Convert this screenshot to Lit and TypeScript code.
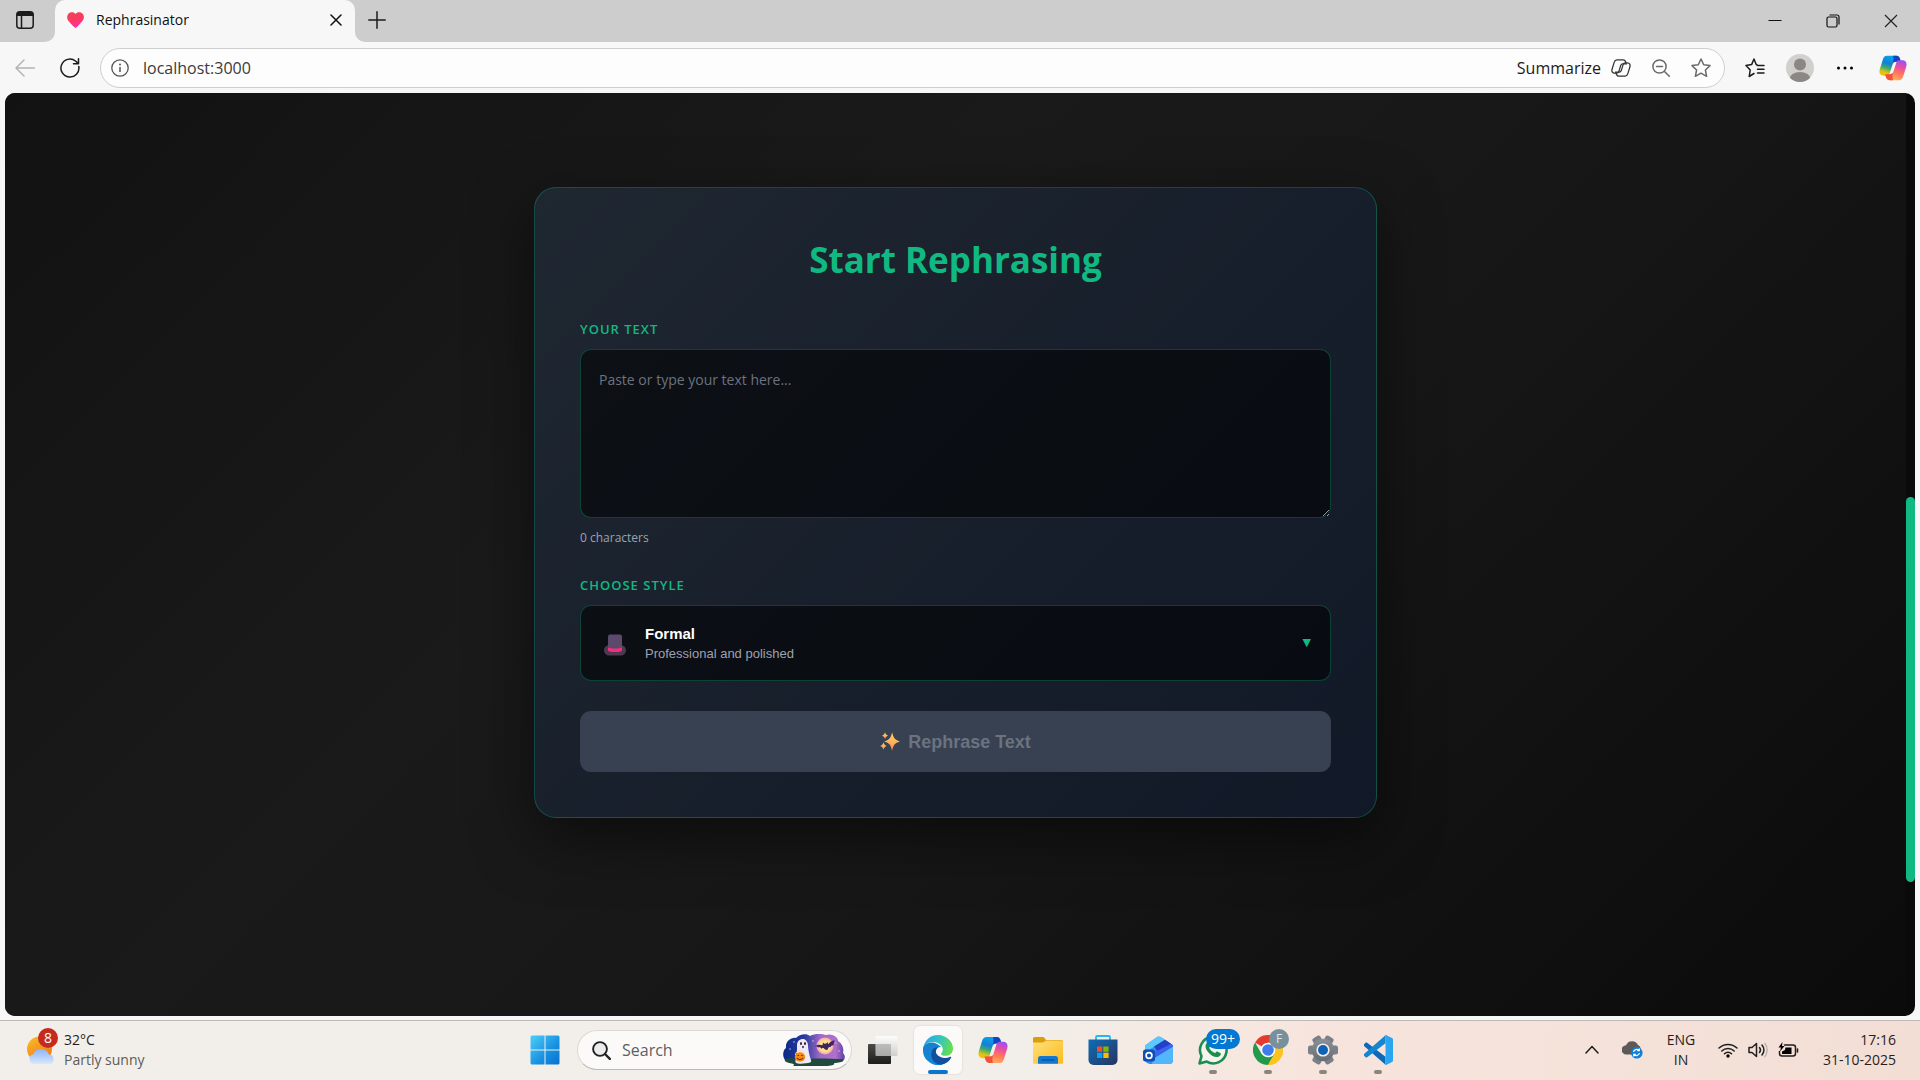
import { LitElement, html, svg, css, nothing } from "lit";
import type { TemplateResult } from "lit";
import { customElement, state } from "lit/decorators.js";
import { classMap } from "lit/directives/class-map.js";

const base = css`
  * { box-sizing: border-box; }
  button, input, select, textarea { font: inherit; color: inherit; margin: 0; }
  button { border: 0; background: none; padding: 0; display: flex; align-items: center; justify-content: center; cursor: pointer; }
  svg { display: block; flex: none; }
  .line { fill: none; stroke: currentColor; stroke-width: 1.5; stroke-linecap: round; stroke-linejoin: round; }
`;

const ribbon =
  "M8.5 1H18.5C21.3 1 22.2 3 22.8 5.2L23.4 7.4H17.8C15.8 7.4 15 8.6 14.4 10.4L11.6 19.4C11 21.4 10 22.2 8 22.2H4.8C1.2 22.2-.3 19.2 .8 15.6L4.2 4.6C5 2.2 6.4 1 8.5 1Z";
const fold = "M15 1h3.5c2.8 0 3.7 2 4.3 4.2l.6 2.2h-5.6c-2 0-2.8 1.2-3.4 3l-.5 1.6c2-4 1.900-8.400 1.100-11Z";

const copilotLogo = (size: number) => html`
  <svg width=${size} height=${size} viewBox="0 0 30 28" aria-hidden="true">
    <defs>
      <linearGradient id="cpA" x1=".6" y1="0" x2=".3" y2="1">
        <stop offset="0" stop-color="#0aa4e8" /><stop offset=".4" stop-color="#1180d8" />
        <stop offset=".62" stop-color="#3aa870" /><stop offset=".85" stop-color="#d8c418" /><stop offset="1" stop-color="#f5c400" />
      </linearGradient>
      <linearGradient id="cpB" x1=".6" y1="0" x2=".3" y2="1">
        <stop offset="0" stop-color="#ffb35c" /><stop offset=".35" stop-color="#ff7a5c" />
        <stop offset=".65" stop-color="#ee4f9a" /><stop offset="1" stop-color="#a04ff0" />
      </linearGradient>
    </defs>
    <path d=${ribbon} fill="url(#cpA)" />
    <path d=${fold} fill="#1442c4" />
    <g transform="rotate(180 15 14)">
      <path d=${ribbon} fill="url(#cpB)" />
      <path d=${fold} fill="#f4503a" />
    </g>
  </svg>`;

@customElement("browser-bar")
class BrowserBar extends LitElement {
  static styles = [
    base,
    css`
      :host { display: block; font-family: "Open Sans", "Noto Sans", sans-serif; color: #1b1b1b; background: #f7f7f7; }
      .strip { display: flex; height: 42px; }
      .lead { width: 55px; background: #cdcdcd; border-bottom-right-radius: 10px; display: flex; align-items: center; justify-content: center; padding-right: 5px; padding-bottom: 2px; }
      .slot { width: 300px; background: linear-gradient(#cdcdcd 50%, #f7f7f7 50%); }
      .tab { display: flex; align-items: center; height: 100%; padding: 0 10px 2px 12px; background: #f7f7f7; border-radius: 10px 10px 0 0; font-size: 14px; color: #111; }
      .title { flex: 1; padding: 0 0 2px 12px; }
      .close { width: 18px; height: 24px; }
      .rest { flex: 1; display: flex; justify-content: space-between; background: #cdcdcd; border-bottom-left-radius: 10px; }
      .add { width: 44px; padding-bottom: 2px; }
      .win { display: flex; }
      .win button { width: 58px; }
      .tools { display: flex; align-items: center; gap: 5px; padding: 6px 4px 5px 5px; }
      .tools > button { width: 40px; height: 40px; }
      .tools > .wide { width: 46px; }
      .tools > .dim { color: #b4b4b4; }
      .address { flex: 1; display: flex; align-items: center; height: 40px; margin: 0 5px; padding: 0 3px 0 10px; border: 1px solid #cfcfcf; border-radius: 20px; background: #fdfdfd; font-size: 16px; }
      .url { flex: 1; min-width: 0; border: 0; outline: 0; padding: 0 0 0 14px; background: none; color: #3a3a3a; }
      .sum { gap: 10px; }
      .mini { width: 40px; height: 38px; color: #6a6a6a; }
      .sum + .mini { margin-left: 10px; }
    `,
  ];

  render() {
    return html`
      <div class="strip">
        <div class="lead">
          <button aria-label="Tab actions">
            <svg width="18" height="18" viewBox="0 0 18 18"><rect class="line" x=".8" y=".8" width="16.400" height="16.400" rx="3" /><path d="M1 3.500a2.500 2.500 0 0 1 2.500-2.500h11a2.500 2.500 0 0 1 2.500 2.500V5H1Z" fill="currentColor" /><path class="line" d="M5.500 5v12" /></svg>
          </button>
        </div>
        <div class="slot">
          <div class="tab">
            <svg width="17" height="16" viewBox="0 0 17 16">
              <defs><linearGradient id="ht" x1=".3" y1="0" x2=".6" y2="1"><stop offset="0" stop-color="#f2415a" /><stop offset=".5" stop-color="#fb3a62" /><stop offset="1" stop-color="#ff2fb4" /></linearGradient></defs>
              <path d="M8.500 2C10-.3 13.600-.3 15.400 1.600c2 2.200 2 5-.2 7.700C13.500 11.500 10.500 15 8.500 16 6.500 15 3.500 11.500 1.800 9.300-.4 6.600-.4 3.800 1.600 1.600 3.400-.3 7-.3 8.500 2Z" fill="url(#ht)" />
            </svg>
            <span class="title">Rephrasinator</span>
            <button class="close" aria-label="Close tab"><svg width="12" height="12" viewBox="0 0 12 12"><path class="line" d="M1 1l10 10M11 1L1 11" /></svg></button>
          </div>
        </div>
        <div class="rest">
          <button class="add" aria-label="New tab"><svg width="18" height="18" viewBox="0 0 18 18"><path class="line" d="M9 .8v16.400M.8 9h16.400" /></svg></button>
          <div class="win">
            <button aria-label="Minimize"><svg width="14" height="14" viewBox="0 0 14 14"><path d="M.5 6h13v1H.5z" fill="#111" /></svg></button>
            <button aria-label="Restore"><svg width="14" height="14" viewBox="0 0 14 14"><rect x="1" y="3" width="10" height="10" rx="1.500" fill="none" stroke="#111" stroke-width="1.200" /><path d="M3.500 1h7.500a2 2 0 0 1 2 2v7.500" fill="none" stroke="#111" stroke-width="1.200" /></svg></button>
            <button aria-label="Close window"><svg width="14" height="14" viewBox="0 0 14 14"><path d="M1 1l12 12M13 1L1 13" stroke="#222" stroke-width="1.200" /></svg></button>
          </div>
        </div>
      </div>
      <div class="tools">
        <button class="dim" aria-label="Back"><svg width="20" height="18" viewBox="0 0 20 18"><path class="line" d="M19.500 9H1M9 1L1 9l8 8" /></svg></button>
        <button aria-label="Reload"><svg width="20" height="20" viewBox="0 0 20 20"><path class="line" d="M18.800 8.500A9 9 0 1 1 15.500 3l2.800 2.600M18.500 .8v5h-5" /></svg></button>
        <div class="address">
          <svg width="18" height="18" viewBox="0 0 18 18"><circle cx="9" cy="9" r="8.200" fill="none" stroke="#555" stroke-width="1.300" /><path d="M9 8v5" stroke="#555" stroke-width="1.500" /><circle cx="9" cy="5.500" r="1" fill="#555" /></svg>
          <input class="url" type="text" aria-label="Address" .value=${"localhost:3000"} />
          <button class="sum">
            Summarize
            <svg width="20" height="18" viewBox="-1 0 32 28"><g fill="none" stroke="#333" stroke-width="2"><path d=${ribbon} /><path d=${ribbon} transform="rotate(180 15 14)" /></g></svg>
          </button>
          <button class="mini" aria-label="Zoom"><svg width="18" height="18" viewBox="0 0 18 18"><circle class="line" cx="7.500" cy="7.500" r="6.600" /><path class="line" d="M12.500 12.500l4.800 4.800M4.500 7.500h6" /></svg></button>
          <button class="mini" aria-label="Add to favorites"><svg width="20" height="20" viewBox="0 0 20 20"><path class="line" d="M10 1l2.700 5.800 6.300.8-4.600 4.400 1.200 6.300L10 15.200l-5.600 3.100L5.600 12 1 7.600l6.300-.8Z" /></svg></button>
        </div>
        <button aria-label="Favorites"><svg width="20" height="20" viewBox="0 0 20 20"><path class="line" d="M12 6.800h-.7L9 1 6.600 6.600 1 7.600l4.200 4.400L4.200 18.500 9 15.500M12.500 7.500H19M12.500 11.200H19M12.500 15H19" /></svg></button>
        <button aria-label="Profile"><svg width="28" height="28" viewBox="0 0 28 28"><defs><clipPath id="av"><circle cx="14" cy="14" r="14" /></clipPath></defs><g clip-path="url(#av)"><rect width="28" height="28" fill="#d2d0cd" /><circle cx="14" cy="10.500" r="6" fill="#8a8785" /><ellipse cx="14" cy="25" rx="10.500" ry="7" fill="#8a8785" /></g></svg></button>
        <button aria-label="Settings and more"><svg width="18" height="4" viewBox="0 0 18 4"><circle cx="2.500" cy="2" r="1.500" /><circle cx="9" cy="2" r="1.500" /><circle cx="15.500" cy="2" r="1.500" /></svg></button>
        <button class="wide" aria-label="Copilot">${copilotLogo(28)}</button>
      </div>
    `;
  }
}

@customElement("rephrase-form")
class RephraseForm extends LitElement {
  @state() private text = "";

  static styles = [
    base,
    css`
      :host { display: block; width: 100%; max-width: 843px; font-family: "Open Sans", "Noto Sans", sans-serif; }
      .card { display: flex; flex-direction: column; padding: 45px; border: 1px solid rgba(16, 185, 129, 0.3); border-radius: 22px; background: linear-gradient(135deg, #1f2731, #111827); box-shadow: 0 20px 60px rgba(0, 0, 0, 0.5); }
      .heading { margin: 0 0 32px; font-size: 35px; line-height: 54px; font-weight: 700; text-align: center; color: #10b981; }
      .label { margin-bottom: 10px; font-size: 13px; line-height: 20px; font-weight: 600; letter-spacing: 1px; text-transform: uppercase; color: #10b981; }
      .text { display: block; width: 100%; height: 169px; padding: 18px; border: 1px solid rgba(16, 185, 129, 0.3); border-radius: 11px; outline: 0; background: rgba(0, 0, 0, 0.55); color: #fff; font-size: 14px; line-height: 24px; resize: vertical; }
      .text::placeholder { color: #6b7280; }
      .count { margin: 10px 0 27px; font-size: 12px; line-height: 20px; color: #9ca3af; }
      .picker { display: grid; align-items: center; margin-bottom: 30px; font-family: "Liberation Sans", Arial, sans-serif; }
      .picker > * { grid-area: 1 / 1; }
      .style { appearance: none; width: 100%; height: 76px; padding: 0 60px 20px 64px; border: 1px solid rgba(16, 185, 129, 0.3); border-radius: 11px; outline: 0; background: rgba(0, 0, 0, 0.55); color: #fff; font-size: 15px; font-weight: 700; }
      .face { display: flex; align-items: center; padding: 0 20px 0 24px; pointer-events: none; }
      .hat { margin-top: 4px; }
      .note { flex: 1; padding: 21px 0 0 19px; font-size: 13px; line-height: 18px; color: #9ca3af; }
      .arrow { font: 11px/16px "DejaVu Sans", sans-serif; color: #10b981; }
      .go { gap: 8px; height: 61px; border-radius: 11px; background: #374151; color: #6b7280; font: 700 18px/24px "Liberation Sans", Arial, sans-serif; }
    `,
  ];

  private onInput(e: Event) {
    this.text = (e.target as HTMLTextAreaElement).value;
  }

  render() {
    return html`
      <form class="card" @submit=${(e: Event) => e.preventDefault()}>
        <h2 class="heading">Start Rephrasing</h2>
        <label class="label" for="text">Your Text</label>
        <textarea class="text" id="text" placeholder="Paste or type your text here..." @input=${this.onInput}></textarea>
        <div class="count">${this.text.length} characters</div>
        <label class="label" for="style">Choose Style</label>
        <div class="picker">
          <select class="style" id="style"><option>Formal</option></select>
          <div class="face">
            <svg class="hat" width="22" height="22" viewBox="0 0 22 22">
              <rect x="0" y="11" width="22" height="10.500" rx="5.200" fill="#4b3a52" />
              <path d="M4 2.500C4 1 5.500.5 6.500.5h9c1 0 2.500.5 2.500 2L18 15H4Z" fill="#5d4a6b" />
              <path d="M4 13.500c4 1.300 10 1.300 14 0v3c-1 2-13 2-14 0Z" fill="#f0307c" />
            </svg>
            <span class="note">Professional and polished</span>
            <span class="arrow" aria-hidden="true">▼</span>
          </div>
        </div>
        <button class="go" type="submit" ?disabled=${!this.text}>
          <svg width="20" height="19" viewBox="0 0 19 18">
            <defs><linearGradient id="sp" x1="0" y1="0" x2="0" y2="1"><stop offset="0" stop-color="#ffd35c" /><stop offset=".5" stop-color="#ffb45c" /><stop offset="1" stop-color="#ff8a5c" /></linearGradient></defs>
            <g fill="url(#sp)">
              <path d="M11.500 .3c1.300 5.500 2.300 7 7.400 8.700-5.100 1.700-6.100 3.200-7.400 8.700-1.300-5.500-2.300-7-7.400-8.700 5.100-1.700 6.100-3.200 7.400-8.700Z" />
              <path d="M4.800.3c.6 2 1.200 2.600 2.900 3.200-1.700.6-2.300 1.200-2.900 3.200-.6-2-1.200-2.600-2.900-3.200 1.700-.6 2.300-1.200 2.900-3.200Z" />
              <path d="M3.300 9.700c.7 2.200 1.400 2.900 3.200 3.500-1.800.7-2.500 1.400-3.200 3.600-.7-2.200-1.400-2.900-3.200-3.600 1.800-.6 2.500-1.300 3.200-3.500Z" />
            </g>
          </svg>
          Rephrase Text
        </button>
      </form>
    `;
  }
}

interface App {
  name: string;
  icon: TemplateResult;
  active?: boolean;
  running?: boolean;
  badge?: string;
  tone?: string;
}

const icon = (body: unknown) => html`<svg width="30" height="30" viewBox="0 0 30 30" aria-hidden="true">${body}</svg>`;

const apps: App[] = [
  {
    name: "Task view",
    icon: icon(svg`<defs><linearGradient id="tv" x1="0" y1="0" x2="0" y2="1"><stop offset="0" stop-color="#4a4a48"/><stop offset="1" stop-color="#1c1c1b"/></linearGradient><linearGradient id="tw" x1="0" y1="0" x2="0" y2="1"><stop offset="0" stop-color="#fff"/><stop offset="1" stop-color="#c9c9c7"/></linearGradient></defs>
      <rect x="0" y="9" width="23" height="20" rx="1" fill="url(#tv)"/><rect x="7.500" y="1" width="22" height="20" rx="1" fill="url(#tw)" opacity=".85"/><rect x="8" y="9" width="15" height="12" fill="#999" opacity=".35"/>`),
  },
  {
    name: "Edge",
    active: true,
    icon: icon(svg`<defs><linearGradient id="eg" x1="0" y1=".3" x2="1" y2=".6"><stop offset="0" stop-color="#2aa6e8"/><stop offset=".45" stop-color="#33c2c6"/><stop offset="1" stop-color="#66e04a"/></linearGradient><linearGradient id="eb" x1="0" y1="0" x2=".4" y2="1"><stop offset="0" stop-color="#1b7fc8"/><stop offset="1" stop-color="#0f86dd"/></linearGradient></defs>
      <path d="M0 14C0 9 5 7 9.500 7.500 14.500 8 18 12 18 12c-3.500 0-5.500 2.500-5.500 6 0 6 5 10 10 10A15 15 0 0 1 0 14Z" fill="url(#eb)"/>
      <path d="M9.500 14.500C6 22 10.500 29.800 18 29.700c5-.7 8.500-3.700 10.200-7.200.2-.7-.3-1-.9-.7-4.800 2.400-11.300 1.200-14-3.300-1-2 0-4.500 1.200-6-2 0-4 .5-5 2Z" fill="#124f9c"/>
      <path d="M.3 12.500C2 4.500 8 0 15 0c8.500 0 15 6.500 15 13.500 0 5-3.500 7.300-7 7.300-3.400 0-5-.9-5-1.800 0-.8 1.800-1.500 1.800-4.500C19.800 9.500 14.500 7 9.500 7 5 7 1.500 9.500.3 12.500Z" fill="url(#eg)"/>`),
  },
  { name: "Copilot", icon: copilotLogo(30) },
  {
    name: "File Explorer",
    icon: icon(svg`<defs><linearGradient id="fe" x1="0" y1="0" x2="1" y2="1"><stop offset="0" stop-color="#ffe07a"/><stop offset="1" stop-color="#fbbb1d"/></linearGradient></defs>
      <path d="M0 3.500A1.500 1.500 0 0 1 1.500 2h8c1 0 1.500.3 2 1l1.500 2H28.500A1.500 1.500 0 0 1 30 6.500V12H0Z" fill="#dc9c0c"/><path d="M0 7.500h9.500c1 0 1.500-.3 2.200-.9L13 5.500h15.500A1.500 1.500 0 0 1 30 7v21a.8.8 0 0 1-.8.8H.8A.8.8 0 0 1 0 28Z" fill="url(#fe)"/><path d="M5 23.500A2.500 2.500 0 0 1 7.500 21h15a2.500 2.500 0 0 1 2.500 2.500v5.300H5Z" fill="#1478d0"/><path d="M8.500 25h13" stroke="#0a4d96" stroke-width="1.200"/>`),
  },
  {
    name: "Store",
    icon: icon(svg`<defs><linearGradient id="st" x1="0" y1="0" x2="1" y2="1"><stop offset="0" stop-color="#0f6db8"/><stop offset="1" stop-color="#27345f"/></linearGradient></defs>
      <path d="M8 5V2.300A1.300 1.300 0 0 1 9.300 1h11.400A1.300 1.300 0 0 1 22 2.300V5" fill="none" stroke="#27b6ee" stroke-width="1.800"/><path d="M.5 4.500h29V25a5 5 0 0 1-5 5h-19a5 5 0 0 1-5-5Z" fill="url(#st)"/><path d="M9 11.500h5.300v5.300H9z" fill="#f25022"/><path d="M15.300 11.500h5.300v5.300h-5.300z" fill="#7fba00"/><path d="M9 17.700h5.300V23H9z" fill="#00a4ef"/><path d="M15.300 17.700h5.300V23h-5.300z" fill="#ffb900"/>`),
  },
  {
    name: "Outlook",
    icon: icon(svg`<defs><linearGradient id="ol" x1="0" y1="0" x2="1" y2="1"><stop offset="0" stop-color="#3ba8f8"/><stop offset="1" stop-color="#2b6fe8"/></linearGradient></defs>
      <path d="M2 10.500L14 2c1.200-.8 2.600-.8 3.800 0l10.700 7c1 .7 1.500 1.500 1.500 2.700V25a4 4 0 0 1-4 4H7a5 5 0 0 1-5-5Z" fill="url(#ol)"/><path d="M2 10.500L14 2c1.200-.8 2.600-.8 3.800 0L22 4.800 6.500 14.500H2Z" fill="#5cc8fb"/><path d="M11 11.500L22 4.800l6 4L15 17.500Z" fill="#2340c8"/><path d="M28.500 9c1 .7 1.500 1.500 1.500 2.700L10 24l-1-6Z" fill="#3e62ee"/><path d="M10 24l20-12.300V25a4 4 0 0 1-4 4H9Z" fill="#52b7fa"/><rect x="0" y="14.500" width="12" height="12" rx="2.500" fill="#0f4fb4"/><circle cx="6" cy="20.500" r="2.900" fill="none" stroke="#fff" stroke-width="1.700"/>`),
  },
  {
    name: "WhatsApp",
    running: true,
    badge: "99+",
    tone: "blue",
    icon: icon(svg`<path d="M1.500 28.500l2-7.300A13.300 13.300 0 1 1 8.700 26.600Z" fill="#f6f3ef" stroke="#1a8d50" stroke-width="2.600" stroke-linejoin="round"/><path d="M10.500 7.500c-.7-.2-1.300 0-1.700.5-2.300 2.600-1.300 6 1.700 9.500 3.500 4 7.500 5.500 10.500 4 1.500-.8 2-2 1.800-3.200l-3.600-1.800c-.6-.2-1 .2-2 1.600-2.500-.7-5-3-6-5.400 1.200-1.200 1.500-1.600 1.200-2.300Z" fill="#1a8d50"/>`),
  },
  {
    name: "Chrome",
    running: true,
    badge: "F",
    tone: "grey",
    icon: icon(svg`<path d="M15 15L2 7.500A15 15 0 0 1 28 7.500Z" fill="#e33b2e"/><path d="M15 15L28 7.500A15 15 0 0 1 15 30Z" fill="#fcc31e"/><path d="M15 0A15 15 0 0 1 28 7.500H15Z" fill="#e33b2e"/><path d="M2 7.500A15 15 0 0 0 15 30L21.500 18.700 8.500 18.700Z" fill="#229a4a"/><path d="M15 7.500h13A15 15 0 0 1 15 30l6.500-11.300Z" fill="#fcc31e"/><circle cx="15" cy="15" r="7.300" fill="#fff"/><circle cx="15" cy="15" r="5.800" fill="#3f7cf0"/>`),
  },
  {
    name: "Settings",
    running: true,
    icon: icon(svg`<defs><linearGradient id="gr" x1="0" y1="0" x2="0" y2="1"><stop offset="0" stop-color="#8b9197"/><stop offset="1" stop-color="#666c73"/></linearGradient></defs>
      <g fill="#7a8087"><rect x="0" y="10.500" width="30" height="9" rx="2.200"/><rect x="0" y="10.500" width="30" height="9" rx="2.200" transform="rotate(60 15 15)"/><rect x="0" y="10.500" width="30" height="9" rx="2.200" transform="rotate(120 15 15)"/></g><circle cx="15" cy="15" r="11.300" fill="url(#gr)"/><circle cx="15" cy="15" r="6.600" fill="#f4efeb"/><circle cx="15" cy="15" r="5" fill="#0f62b4"/>`),
  },
  {
    name: "Visual Studio Code",
    running: true,
    icon: icon(svg`<path d="M1 9.200l1.600-1.400c.5-.4 1.100-.4 1.600 0L22.500 21.800V29.800L1 11Z" fill="#0d6ab8"/><path d="M1 20.800l1.600 1.400c.5.4 1.100.4 1.600 0L22.500 8.200V.2L1 19Z" fill="#1585cf"/><path d="M21.500.3c.6-.4 1.300-.4 2 0L29 3c.6.3 1 .8 1 1.500v21c0 .7-.4 1.200-1 1.500l-5.500 2.700c-.7.400-1.400.4-2-.1 1 .5 1-.5 1-1V1.500c0-.6 0-1.400-1-1.200Z" fill="#2aa5f0"/>`),
  },
];

@customElement("task-bar")
class TaskBar extends LitElement {
  static styles = [
    base,
    css`
      :host { display: block; font-family: "Open Sans", "Noto Sans", sans-serif; color: #1f1f1f; }
      .bar { display: grid; grid-template-columns: 1fr auto 1fr; align-items: center; height: 60px; padding: 0 24px 2px 27px; border-top: 1px solid #bdbab6; background: linear-gradient(100deg, #f2efea 0%, #f2efea 52%, #f7e5dd 68%, #f2ded5 100%); font-size: 14px; line-height: 20px; }
      .weather { justify-self: start; gap: 9px; text-align: left; }
      .sky { position: relative; }
      .alert { position: absolute; left: 11px; top: -8px; width: 20px; height: 20px; border-radius: 10px; background: #c42b1c; color: #fff; text-align: center; }
      .soft { color: #5d5b58; }
      .mid { display: flex; align-items: center; gap: 7px; padding-top: 1px; }
      .app { position: relative; width: 48px; height: 48px; border-radius: 6px; }
      .active { background: rgba(255, 255, 255, 0.65); box-shadow: 0 0 1px 1px rgba(0, 0, 0, 0.05); }
      .mark { position: absolute; bottom: 0; left: 20px; width: 8px; height: 4px; border-radius: 2px; background: #8b857f; }
      .active .mark { left: 14px; width: 20px; background: #0a74cf; }
      .badge { position: absolute; top: 3px; height: 20px; border-radius: 10px; color: #fff; line-height: 20px; }
      .blue { left: 17px; width: 34px; background: #0078d4; }
      .grey { left: 25px; width: 20px; background: #78909c; color: #dfe6ea; font-size: 12px; }
      .search { display: flex; align-items: center; width: 275px; height: 40px; margin-left: 1px; padding: 0 6px 0 14px; border: 1px solid #dcd8d3; border-bottom-color: #bdb9b5; border-radius: 20px; background: #fbfaf8; font-size: 16px; }
      .query { flex: 1; min-width: 0; border: 0; outline: 0; padding: 0 0 0 11px; background: none; }
      .query::placeholder { color: #5f5f5f; }
      .tray { justify-self: end; display: flex; align-items: center; }
      .tray button { height: 48px; }
      .chev { width: 40px; }
      .cloud { width: 40px; }
      .lang { width: 58px; margin-right: 2px; }
      .quick { gap: 10px; padding: 0 6px; }
      .clock { width: 91px; justify-content: flex-end; text-align: right; }
    `,
  ];

  render() {
    return html`
      <footer class="bar">
        <button class="weather">
          <span class="sky">
            <svg width="28" height="28" viewBox="0 0 28 28">
              <defs><linearGradient id="su" x1="0" y1="0" x2=".6" y2="1"><stop offset="0" stop-color="#fbbf2a" /><stop offset="1" stop-color="#f07a1a" /></linearGradient><linearGradient id="cl" x1="0" y1="0" x2="0" y2="1"><stop offset="0" stop-color="#8db4f4" /><stop offset="1" stop-color="#d8e8fd" /></linearGradient></defs>
              <circle cx="12.500" cy="13" r="12.500" fill="url(#su)" /><path d="M7 28a5 5 0 0 1-.8-9.800A8.500 8.500 0 0 1 22 18.500a4.800 4.800 0 0 1 .8 9.500Z" fill="url(#cl)" />
            </svg>
            <span class="alert">8</span>
          </span>
          <span>32°C<br /><span class="soft">Partly sunny</span></span>
        </button>
        <nav class="mid" aria-label="Apps">
          <button class="app" aria-label="Start">${icon(svg`<defs><linearGradient id="wn" gradientUnits="userSpaceOnUse" x1="0" y1="0" x2="30" y2="30"><stop offset="0" stop-color="#4fd0fb"/><stop offset=".6" stop-color="#1690e0"/><stop offset="1" stop-color="#0a6fd0"/></linearGradient></defs><g fill="url(#wn)"><path d="M.5 2a1.500 1.500 0 0 1 1.500-1.500h12.500v14H.5zM15.500.5H28A1.500 1.500 0 0 1 29.500 2v12.500h-14zM.5 15.500h14v14H2A1.500 1.500 0 0 1 .5 28zM15.500 15.500h14V28a1.500 1.500 0 0 1-1.500 1.500H15.500z"/></g>`)}</button>
          <div class="search">
            <svg width="19" height="19" viewBox="0 0 19 19"><circle cx="8" cy="8" r="6.900" fill="#ececec" stroke="#222" stroke-width="1.900" /><path d="M13 13l4.800 4.800" stroke="#222" stroke-width="2.400" stroke-linecap="round" /></svg>
            <input class="query" type="search" aria-label="Search" placeholder="Search" />
            <svg width="62" height="32" viewBox="0 0 62 32" aria-hidden="true">
              <defs><linearGradient id="nt"><stop offset="0" stop-color="#0a2a86" /><stop offset=".35" stop-color="#2a3a9e" /><stop offset=".6" stop-color="#a06ac8" /><stop offset=".85" stop-color="#b070cc" /><stop offset="1" stop-color="#5a3fa0" /></linearGradient><radialGradient id="mn"><stop offset="0" stop-color="#fff2a8" /><stop offset=".7" stop-color="#ffd98a" /><stop offset="1" stop-color="#f0a0b8" /></radialGradient></defs>
              <path d="M2 26C-1 22 0 16 3 14 2 8 8 3 13 4 16 0 24-1 27 2 32-1 40 0 43 1 49-1 55 3 55 7c5 3 6 9 5 12 3 3 2 7-1 9H4Z" fill="url(#nt)" />
              <path d="M2 25c8-2 16 1 24 0 12-1 22 0 34 0 1 3-5 4-9 4 2 2-4 3-8 3H10c3-2 0-2-4-3-3-1-5-2-4-4Z" fill="#1f4a3c" />
              <circle cx="42" cy="12" r="8.500" fill="url(#mn)" />
              <path d="M31.500 12.500c2.500-2 5.500-2.200 8-1.200L40 8.500l1.500 1.300 1.800-.3 1.200-1.600.8 2.400c1.500-2.300 3.700-3.800 6.700-4-1.200 1.700-1.500 3.200-1.200 5-1.600-.5-2.800.2-3.300 1.900-1.200-.6-2.200 0-2.800 2.300-.9.500-1.900.5-2.600.1-1.100-1.800-2.400-2-3.800-.9-.5-1.600-1.700-2-3.300-1.100-.7-1.100-1.800-1.500-3.500-1.100Z" fill="#40245e" />
              <path d="M14 11c0-7 10-9 11 0 0 4 1 8 2 12 1 3 2 5 0 5.500-3 1-9 1.500-12 1-3-.5-3-2-2-5 1-4 1-9 1-13.500Z" fill="#efe9fa" />
              <ellipse cx="18" cy="9.500" rx="1" ry="1.500" fill="#222" /><ellipse cx="22" cy="9.500" rx="1" ry="1.500" fill="#222" /><ellipse cx="20" cy="13" rx="1" ry="1.300" fill="#5a3a6a" />
              <path d="M12.500 21a4.500 4.500 0 0 1 9 0" fill="none" stroke="#ffe2a0" /><ellipse cx="17" cy="23" rx="5.200" ry="4.700" fill="#f58a12" /><path d="M14 24c1.500 2 4.500 2 6 0M14.500 21.500h1.500M18.200 21.500h1.500" stroke="#5c2a08" stroke-width="1.200" fill="none" />
              <g fill="#cfe0ff"><circle cx="7" cy="15" r=".7" /><circle cx="11" cy="8" r=".7" /><circle cx="30" cy="7" r=".7" /><circle cx="56" cy="17" r=".7" /><circle cx="53" cy="9" r=".6" /></g>
            </svg>
          </div>
          ${apps.map(
            (a) => html`<button class=${classMap({ app: true, active: !!a.active })} aria-label=${a.name}>
              ${a.icon}
              ${a.badge ? html`<span class="badge ${a.tone}">${a.badge}</span>` : nothing}
              ${a.active || a.running ? html`<span class="mark"></span>` : nothing}
            </button>`
          )}
        </nav>
        <div class="tray">
          <button class="chev" aria-label="Hidden icons"><svg width="14" height="9" viewBox="0 0 14 9"><path class="line" d="M1 8l6-6.500L13 8" /></svg></button>
          <button class="cloud" aria-label="OneDrive"><svg width="21" height="18" viewBox="0 0 21 18"><path d="M4.500 13.500A4.500 4.500 0 0 1 4 4.300 6.500 6.500 0 0 1 16 4c2 .8 3 3 2.500 5L14 13.500Z" fill="#5c5a58" /><circle cx="14.800" cy="11.800" r="5.800" fill="#0f7fdc" /><path d="M11.500 11a3.200 3.200 0 0 1 5.500-1.500M17.500 12a3.200 3.200 0 0 1-5.500 1.500M17.300 7.500v2.200h-2.200M11.700 15.500v-2.200h2.200" fill="none" stroke="#fff" stroke-width="1.200" /></svg></button>
          <button class="lang">ENG<br />IN</button>
          <button class="quick" aria-label="Network, volume, battery">
            <svg width="20" height="16" viewBox="0 0 20 16"><path class="line" d="M1 6a13 13 0 0 1 18 0M3.800 9a9 9 0 0 1 12.400 0M6.500 11.800a5 5 0 0 1 7 0" /><circle cx="10" cy="14" r="1.700" /></svg>
            <svg width="20" height="16" viewBox="0 0 20 16"><path class="line" d="M1 5.500h3L8.500 1.500v13L4 10.500H1ZM11.500 5.500a4 4 0 0 1 0 5M14 3a7.500 7.500 0 0 1 0 10" /><path d="M16.500 1a10.500 10.500 0 0 1 0 14" fill="none" stroke="#b5aca6" stroke-width="1.200" /></svg>
            <svg width="21" height="16" viewBox="0 0 21 16"><path class="line" d="M6.500 3H15a2.500 2.500 0 0 1 2.500 2.500v6A2.500 2.500 0 0 1 15 14H4a2.500 2.500 0 0 1-2.500-2.500V9.500M19.500 7v3" /><path d="M7.500 5.500h6V12H4V9.500l3-1.500ZM4.500 0L.5 5.500H3L2 9.500 6.500 4H4Z" /></svg>
          </button>
          <button class="clock">17:16<br />31-10-2025</button>
        </div>
      </footer>
    `;
  }
}

@customElement("app-root")
class AppRoot extends LitElement {
  static styles = css`
    :host { display: flex; flex-direction: column; min-height: 100vh; background: #f7f7f7; }
    .view { flex: 1; display: flex; margin: 0 5px 4px; border-radius: 10px; overflow: hidden; background: #0a0a0a; }
    .page { flex: 1; display: flex; justify-content: center; align-items: flex-start; padding: 94px 20px; background: linear-gradient(135deg, #121212 0%, #1a1a1a 36%, #171717 58%, #0b0b0b 100%); }
    .track { width: 9px; display: flex; flex-direction: column; }
    .before { flex: 404; }
    .thumb { flex: 384; border-radius: 5px; background: #10b981; }
    .after { flex: 134; }
  `;

  render() {
    return html`
      <browser-bar></browser-bar>
      <div class="view">
        <main class="page"><rephrase-form></rephrase-form></main>
        <div class="track" aria-hidden="true"><div class="before"></div><div class="thumb"></div><div class="after"></div></div>
      </div>
      <task-bar></task-bar>
    `;
  }
}
